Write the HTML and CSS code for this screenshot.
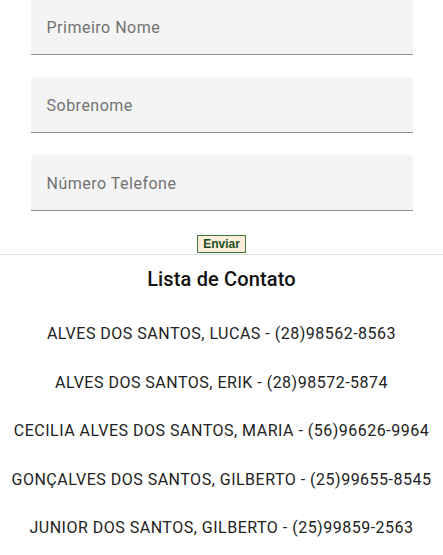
FILE: index.html
```html
<!DOCTYPE html>
<html lang="pt">
<head>
<meta charset="utf-8">
<link rel="stylesheet" href="styles.css">
</head>
<body>
<form class="form">
  <div class="field"><span class="placeholder">Primeiro Nome</span></div>
  <div class="field"><span class="placeholder">Sobrenome</span></div>
  <div class="field"><span class="placeholder">Número Telefone</span></div>
  <div class="actions"><button type="button" class="btn">Enviar</button></div>
</form>
<hr class="divider">
<section class="contacts">
  <h3 class="title">Lista de Contato</h3>
  <ul class="list">
    <li>ALVES DOS SANTOS, LUCAS - (28)98562-8563</li>
    <li>ALVES DOS SANTOS, ERIK - (28)98572-5874</li>
    <li>CECILIA ALVES DOS SANTOS, MARIA - (56)96626-9964</li>
    <li>GONÇALVES DOS SANTOS, GILBERTO - (25)99655-8545</li>
    <li>JUNIOR DOS SANTOS, GILBERTO - (25)99859-2563</li>
  </ul>
</section>
</body>
</html>
```

FILE: styles.css
```css
* { box-sizing: border-box; }
html, body { margin: 0; padding: 0; background: #fff; }
body { font-family: Roboto, "Noto Sans", sans-serif; color: #212121; }

.form {
  width: 382px;
  margin: -1px auto 0;
  display: flex;
  flex-direction: column;
  gap: 22px;
}
.field {
  height: 56px;
  background: #f4f4f4;
  border-radius: 4px 4px 0 0;
  border-bottom: 1px solid #8c8c8c;
  display: flex;
  align-items: center;
  padding: 2px 16px 0;
}
.placeholder {
  font-size: 16px;
  color: #727272;
  letter-spacing: 0.5px;
}
.actions {
  display: flex;
  justify-content: center;
  margin-top: 2px;
}
.btn {
  font-family: "Liberation Sans", Arial, sans-serif;
  font-weight: bold;
  font-size: 12px;
  height: 18px;
  width: 49px;
  padding: 0;
  background: #fdeedb;
  color: #1c4f22;
  border: 1px solid #3c7a3c;
  line-height: 16px;
}
.divider {
  margin: 1px 0 0;
  border: 0;
  border-top: 1px solid #e0e0e0;
  height: 0;
}
.contacts {
  display: flex;
  flex-direction: column;
  align-items: center;
}
.title {
  margin: 12px 0 0;
  font-size: 20px;
  font-weight: 500;
  line-height: 24px;
  letter-spacing: 0.15px;
  color: #111;
}
.list {
  list-style: none;
  margin: 31px 0 0;
  padding: 0;
  display: flex;
  flex-direction: column;
  align-items: center;
  gap: 24.6px;
}
.list li {
  font-size: 16px;
  line-height: 24px;
  color: #222;
  letter-spacing: 0.5px;
  white-space: nowrap;
}
```
